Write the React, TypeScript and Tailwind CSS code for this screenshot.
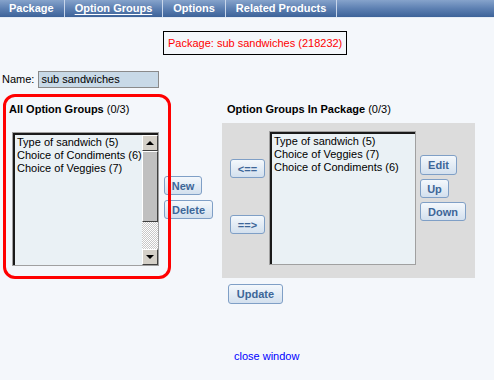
import React from 'react';

function Btn({ label, className = '' }: { label: string; className?: string }) {
  return (
    <button
      className={`h-[19px] rounded-[3px] border border-[#7f9fc6] bg-gradient-to-b from-[#f4f8fc] to-[#d3e0ee] px-[3px] text-[11px] font-bold leading-[16px] text-[#3d6698] ${className}`}
    >
      {label}
    </button>
  );
}

function ListBox({ items, scroll }: { items: string[]; scroll?: boolean }) {
  return (
    <div className="flex h-[134px] w-[147px] border border-[#a0a0a0] bg-[#eaf1f5]">
      <div className="flex flex-1 border-l-2 border-t-2 border-[#1a1a1a]">
        <div className="flex-1 pl-[2px] pt-[1px] text-[11px] leading-[13px] text-black">
          {items.map((t) => (
            <div key={t} className="whitespace-nowrap">{t}</div>
          ))}
        </div>
        {scroll && (
          <div className="flex w-[16px] flex-col">
            <div className="flex h-[16px] items-center justify-center border border-t-white border-l-white border-r-[#404040] border-b-[#404040] bg-[#d4d0c8]">
              <div className="h-0 w-0 border-x-[4px] border-b-[4px] border-x-transparent border-b-black" />
            </div>
            <div className="h-[71px] border border-t-white border-l-white border-r-[#404040] border-b-[#404040] bg-[#c0c0c0]" />
            <div className="flex-1 bg-[repeating-conic-gradient(#c8c8c8_0_25%,#ffffff_0_50%)] bg-[length:2px_2px]" />
            <div className="flex h-[16px] items-center justify-center border border-t-white border-l-white border-r-[#404040] border-b-[#404040] bg-[#d4d0c8]">
              <div className="h-0 w-0 border-x-[4px] border-t-[4px] border-x-transparent border-t-black" />
            </div>
          </div>
        )}
      </div>
    </div>
  );
}

export default function App() {
  const tabs = ['Package', 'Option Groups', 'Options', 'Related Products'];
  return (
    <div className="relative h-[380px] w-[494px] overflow-hidden bg-[#f4f7fb] font-['Liberation_Sans',Arial,sans-serif] text-[11px]">
      <div className="flex h-[18px] items-stretch border-b border-[#e6edf5] bg-gradient-to-b from-[#86a3cb] via-[#5d80b2] to-[#3d6399]">
        {tabs.map((t, i) => (
          <div
            key={t}
            className={`flex items-center border-r border-[#c8d6ea] text-[11px] font-bold text-white ${i === 0 ? 'pl-[9px] pr-[10px]' : 'px-[10px]'}`}
          >
            <span className={i === 1 ? 'underline underline-offset-2' : ''}>{t}</span>
          </div>
        ))}
      </div>

      <div className="pl-[163px] pt-[13px]">
        <div className="flex h-[24px] w-[184px] items-center whitespace-nowrap border border-black pl-[4px] text-[11px] text-[#ff0000]">
          Package: sub sandwiches (218232)
        </div>
      </div>

      <div className="mt-[16px] flex items-center pl-[2px]">
        <span className="text-[11px] text-black">Name:</span>
        <div className="ml-[4px] flex h-[17px] w-[121px] items-center border border-[#8a8a8a] bg-[#c8d9e7] pl-[2px] text-[11px] text-black">
          sub sandwiches
        </div>
      </div>

      <div className="mt-[15px] flex">
        <div className="w-[222px] pl-[9px]">
          <div className="leading-[13px] text-black">
            <span className="font-bold">All Option Groups</span> (0/3)
          </div>
          <div className="mt-[16px] flex pl-[3px]">
            <ListBox scroll items={['Type of sandwich (5)', 'Choice of Condiments (6)', 'Choice of Veggies (7)']} />
            <div className="ml-[5px] mt-[44px] flex flex-col items-start gap-[5px]">
              <Btn label="New" className="w-[38px]" />
              <Btn label="Delete" className="w-[49px]" />
            </div>
          </div>
        </div>

        <div className="flex flex-col">
          <div className="pl-[5px] leading-[13px] text-black">
            <span className="font-bold">Option Groups In Package</span> (0/3)
          </div>
          <div className="mt-[7px] flex h-[155px] w-[253px] bg-[#dcdcdc] pt-[8px]">
            <div className="ml-[8px] mt-[28px] flex w-[39px] flex-col gap-[37px]">
              <Btn label="<==" className="w-[35px]" />
              <Btn label="==>" className="w-[35px]" />
            </div>
            <ListBox items={['Type of sandwich (5)', 'Choice of Veggies (7)', 'Choice of Condiments (6)']} />
            <div className="ml-[4px] mt-[24px] flex flex-col items-start gap-[4px]">
              <Btn label="Edit" className="w-[37px] !h-[20px]" />
              <Btn label="Up" className="w-[29px]" />
              <Btn label="Down" className="w-[46px]" />
            </div>
          </div>
          <div className="mt-[6px] pl-[6px]">
            <Btn label="Update" className="w-[55px] !h-[20px]" />
          </div>
        </div>
      </div>

      <div className="mt-[44px] pl-[234px] text-[11px] text-[#0000ff]">close window</div>

      <div className="pointer-events-none absolute left-[3px] top-[94px] h-[185px] w-[168px] rounded-[12px] border-[3px] border-[#ff0000]" />
    </div>
  );
}
